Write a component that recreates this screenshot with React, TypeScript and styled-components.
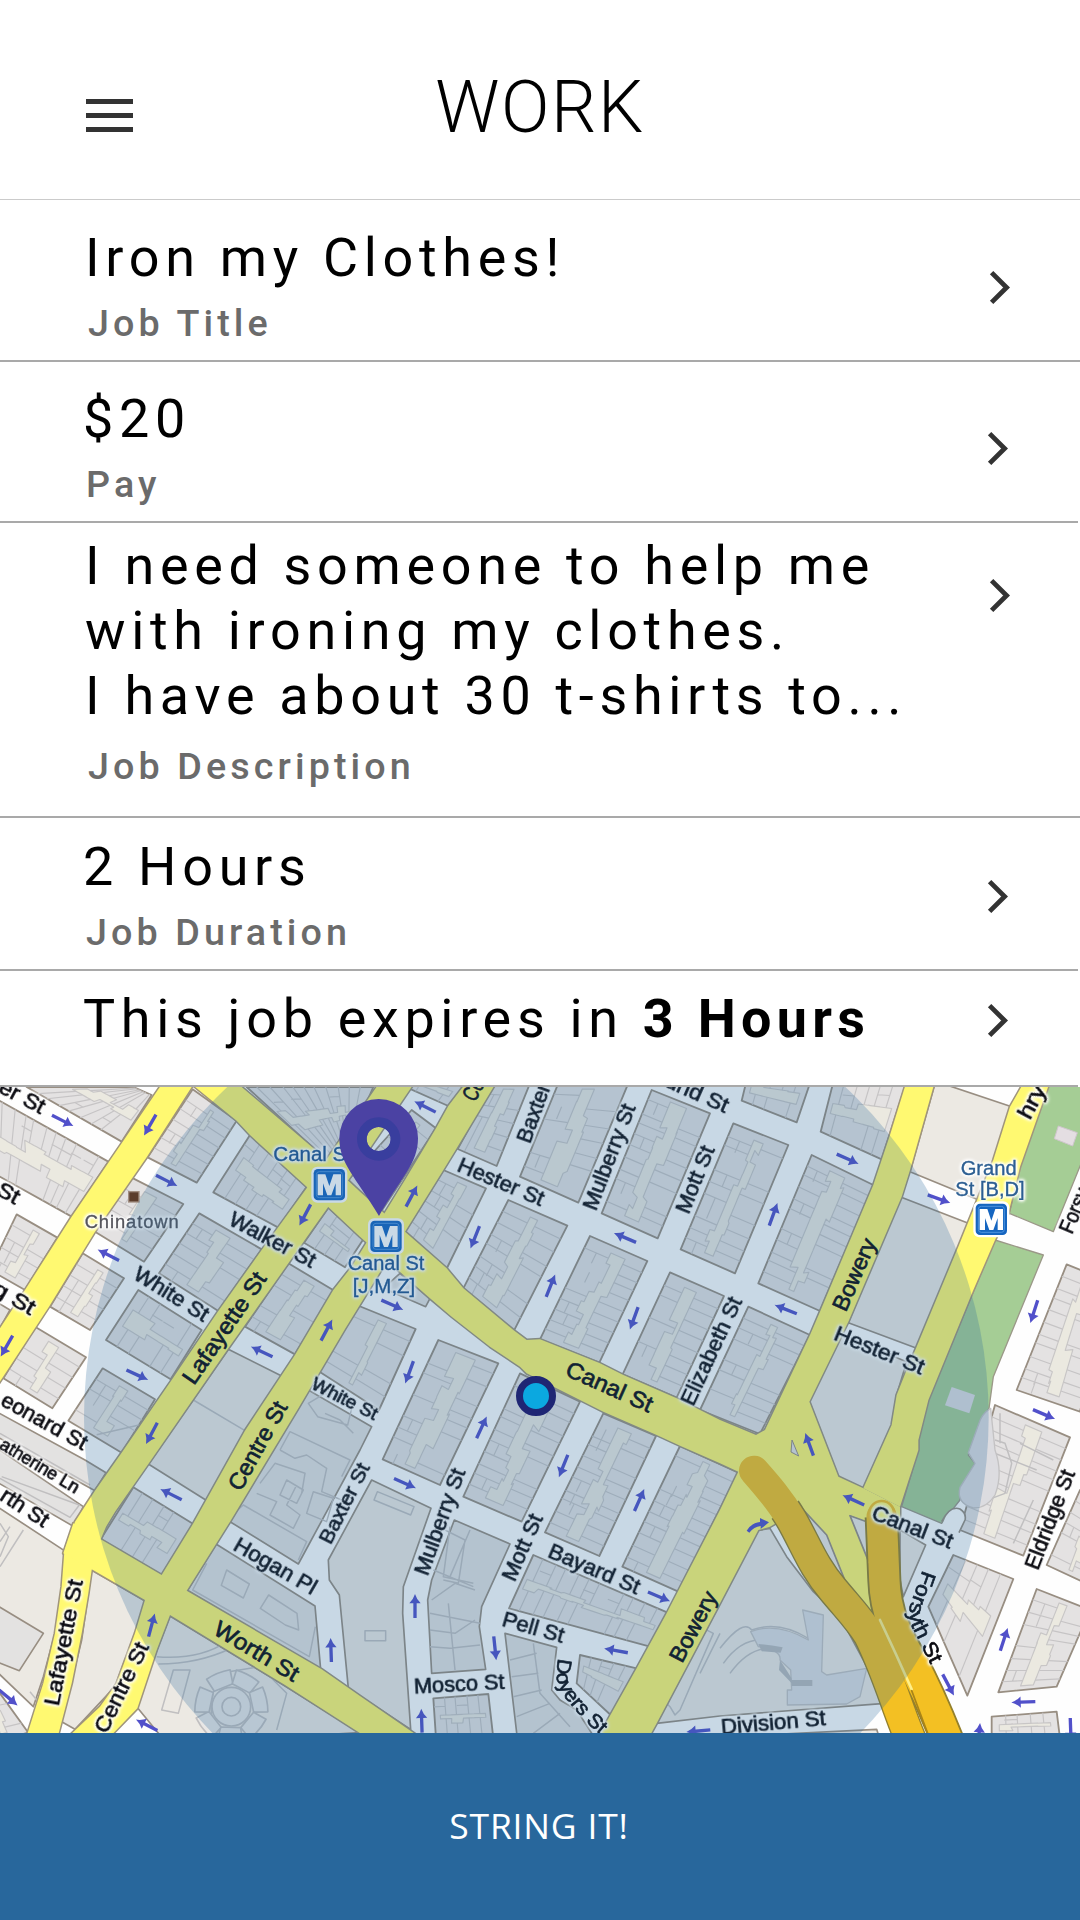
import React from "react";
import styled, { createGlobalStyle } from "styled-components";

const GlobalStyle = createGlobalStyle`
  html, body { margin: 0; padding: 0; background: #fff; }
  * { box-sizing: border-box; }
`;

const Screen = styled.div`
  width: 1080px;
  height: 1920px;
  display: flex;
  flex-direction: column;
  overflow: hidden;
  background: #fff;
  color: #000;
  font-family: Roboto, "Liberation Sans", sans-serif;
`;

const Header = styled.header`
  height: 200px;
  flex: none;
  display: grid;
  grid-template-columns: 1fr auto 1fr;
  align-items: start;
  border-bottom: 1px solid #cbcbcb;
`;

const MenuButton = styled.button`
  justify-self: start;
  margin: 99px 0 0 86px;
  padding: 0;
  border: 0;
  background: none;
  display: flex;
  flex-direction: column;
  gap: 9px;
`;

const MenuBar = styled.span`
  display: block;
  width: 47px;
  height: 5px;
  background: #333;
`;

const ScreenTitle = styled.h1`
  margin: 66px 0 0;
  font-size: 71.6px;
  line-height: 84px;
  font-weight: 300;
  letter-spacing: 1.5px;
`;

const Row = styled.section<{ $height: number; $top: number; $shift?: number; $short?: boolean }>`
  flex: none;
  width: ${(p) => (p.$short ? 1078 : 1080)}px;
  height: ${(p) => p.$height}px;
  padding: ${(p) => p.$top}px 0 0 ${(p) => 85 - (p.$shift ?? 0)}px;
  display: flex;
  align-items: flex-start;
  justify-content: space-between;
  border-bottom: 2px solid #a9a9a9;
`;

const RowText = styled.div<{ $gap?: number }>`
  display: flex;
  flex-direction: column;
  gap: ${(p) => p.$gap ?? 11}px;
`;

const Value = styled.div`
  font-size: 53.9px;
  line-height: 65px;
  letter-spacing: 5.7px;
  white-space: pre;
`;

const Strong = styled.b`
  font-weight: 700;
  letter-spacing: 5.3px;
`;

const Label = styled.div`
  padding-left: 3px;
  font-size: 37.7px;
  line-height: 44px;
  font-weight: 500;
  letter-spacing: 4.1px;
  color: #6b6b6b;
`;

const ChevronBox = styled.svg<{ $top: number; $right: number }>`
  flex: none;
  width: 22px;
  height: 35px;
  margin: ${(p) => p.$top}px ${(p) => p.$right}px 0 0;
`;

const MapPane = styled.div`
  flex: none;
  width: 1080px;
  height: 646px;
  overflow: hidden;
`;

const MapSvg = styled.svg`
  display: block;
  width: 1080px;
  height: 646px;
  background: #fefefe;
`;

const Street = styled.text<{ $size: number; $halo?: boolean }>`
  font-family: "Liberation Sans", Arial, sans-serif;
  font-size: ${(p) => p.$size}px;
  fill: #0a0a10;
  stroke: #0a0a10;
  stroke-width: 2px;
  filter: ${(p) =>
    p.$halo
      ? "drop-shadow(0 0 4px #fff) drop-shadow(0 0 4px #fff) drop-shadow(0 0 3px #fff)"
      : "none"};
`;

const Place = styled(Street)<{ $color: string }>`
  fill: ${(p) => p.$color};
  stroke: ${(p) => p.$color};
  stroke-width: 1px;
`;

const ActionButton = styled.button`
  flex: 1;
  border: 0;
  padding: 0 2px 4px 0;
  background: #28679c;
  color: #fff;
  font-family: "Open Sans", "Noto Sans", sans-serif;
  font-size: 35.5px;
  letter-spacing: 0.8px;
`;

const Chevron = ({ top, right = 69 }: { top: number; right?: number }) => (
  <ChevronBox $top={top} $right={right} viewBox="0 0 22 35">
    <path d="M2.6 2.6 L17.6 17.5 L2.6 32.4" fill="none" stroke="#333" strokeWidth="4.8" />
  </ChevronBox>
);

/* ---------- map geometry: three units per pixel ---------- */

const parcelBlocks = [
  "80,21 400,21 455,45 365,185",
  "-20,52 325,245 215,410 -20,279",
  "50,403 172,473 75,630 -30,570",
  "105,740 258,832 157,985 10,895",
  "248,520 372,595 270,750 150,680",
  "395,293 550,372 432,545 285,455",
  "578,28 710,122 590,308 443,232",
  "750,165 920,320 835,443 640,337",
  "598,400 785,508 655,693 477,580",
  "415,630 605,750 512,898 318,780",
  "865,550 1003,632 885,823 735,740",
  "985,383 1090,478 1035,562 912,488",
  "308,865 465,958 365,1118 205,1022",
  "740,21 1120,21 1060,160 985,245",
  "1235,90 1308,145 1140,400 1045,300",
  "1235,-20 1390,21 1345,78 1215,20",
  "1070,675 1247,747 1137,990 955,873",
  "1315,780 1495,850 1320,1215 1148,1138",
  "1560,880 1740,965 1565,1325 1390,1250",
  "1810,1000 1968,1068 1798,1428 1635,1357",
  "2040,1098 2215,1178 2035,1535 1867,1460",
  "1600,1425 2003,1598 1950,1700 1527,1585",
  "1740,1725 1910,1765 1832,1905 1730,1810",
  "400,1222 580,1332 485,1485 302,1378",
  "1300,1855 1465,1842 1480,1975 1308,1975",
  "1480,10 1590,10 1490,258 1373,207",
  "1675,10 1885,10 1735,368 1560,290",
  "1955,30 2130,100 1973,475 1805,400",
  "2200,130 2365,195 2205,580 2042,508",
  "1330,270 1458,325 1338,570 1215,455",
  "1525,360 1702,437 1542,752 1390,625",
  "1770,468 1942,543 1798,848 1620,778",
  "2010,577 2172,648 2030,953 1868,883",
  "2245,680 2430,765 2280,1062 2100,990",
  "2435,225 2620,315 2460,693 2275,610",
  "2245,-20 2440,-20 2390,127 2225,62",
  "2499,10 2718,10 2645,238 2462,155",
  "3200,553 3330,605 3240,995 3050,930",
  "2985,975 3210,1072 3070,1427 2880,1350",
  "3240,1230 3340,1300 3280,1520 3140,1455",
  "2860,1425 3040,1497 2902,1847 2785,1580",
  "3110,1527 3270,1590 3170,1820 2995,1837",
  "2975,1910 3170,1895 3180,1975 2975,1975",
  "-60,1850 0,1840 85,1958 -40,1990",
];

const plainBlocks = [
  "685,808 845,888 622,1263 445,1152",
  "-20,1272 193,1412 188,1520 165,1660 130,1790 100,1880 -20,1765",
  "275,1470 435,1563 405,1660 345,1820 225,1948 185,1925 245,1680",
  "510,1608 855,1818 1080,1958 500,1990 410,1880 470,1712",
  "1115,1200 1293,1285 1210,1520 1208,1600 1232,1948 1045,1825 1018,1545 988,1500 985,1440",
  "2700,350 2905,430 2750,805 2545,728",
  "2805,10 2825,10 3035,80 2960,370 2730,275",
  "2510,760 2720,845 2690,945 2675,1035 2590,1225 2515,1190 2428,965",
  "1970,1930 2160,1570 2270,1352 2310,1345 2360,1430 2440,1535 2520,1610 2590,1740 2655,1870 2160,1908",
  "2700,1350 2777,1395 2710,1550 2700,1500",
  "2290,1965 2630,1948 2640,1980 2290,1980",
];

const grayBlocks = [
  "-20,990 255,1140 318,1178 285,1232 -20,1064",
  "-20,1097 250,1280 222,1340 -20,1200",
  "-20,1570 130,1660 58,1772 -20,1742",
  "925,930 1115,1040 1080,1110 895,1452 690,1325",
  "648,1392 945,1578 962,1768 562,1532",
  "1363,1320 1530,1392 1445,1580 1438,1640 1457,1768 1295,1780 1283,1560 1295,1500",
  "1515,1660 1670,1702 1655,1830 1680,1860 1730,1890 1785,1975 1552,1975",
  "1200,580 1290,655 1277,680 1150,625",
  "-20,660 30,690 -20,780",
];

const detailLines = [
  "M580 960L735 1052 M290 1064L440 1030 M0 1060L270 1215 M0 1195L210 1312L238 1275L5 1190",
  "M925 970l50 -30l80 45l-12 50l-90 -25z M975 1000l45 20l40 40 M840 1110l30 -55l180 85l-25 50 M840 1110l45 25l35 -10l60 40l-15 70l60 25",
  "M780 1210l45 -60l90 30l-10 60 M770 1240l60 25l-20 40l70 40l20 -40l-40 -30l30 -60 M690 1310l40 -35l190 110l-25 55 M860 1200l50 30l-20 40l-50 -25z M940 1235l60 20l-20 70l-60 -25z",
  "M680 1470l68 42l-18 42l-66 -38z M806 1545l85 55l5 50l-40 -15l-75 -50z M620 1450l-42 80l350 200l18 -90",
  "M470 1730q130 10 210 -45 M475 1752q120 0 220 -48 M520 1770l50 0l-35 130l-50 -10z M640 1930q-20 -60 20 -150l120 -20l80 80l-30 110",
  "M0 1330l25 40l-25 60 M0 1385l30 -45 M70 1350L0 1460",
  "M90 1835l40 50l60 20 M1295 1560l70 -50l60 20 M1290 1650l75 10l60 -40 M1290 1700l60 5l90 -10 M1290 1600l150 30 M1345 1570l20 200 M1300 1470l120 50 M1350 1340l-20 150l90 20",
  "M1335 1350l60 30l-20 130l-45 -10 M1410 1350l-60 140 M1600 1690l20 150l90 100 M1530 1740l80 -20 M1535 1790l80 -10 M1540 1850l85 -20 M1550 1910l100 -40 M1600 1960l80 -60",
  "M1132 1235l110 45l-10 25l-110 -45z M1095 1652l62 0l0 30l-62 0z",
  "M2010 1880l-30 -30l110 -215l50 25l-100 230l-15 15z M2100 1780l60 -120",
  "M2160 1705q70 -90 95 -55q80 -30 170 25l-10 40 M2190 1780q50 -70 110 -75 M2170 1750q50 -70 110 -70",
  "M2985 1080l30 10l20 60l-20 90l-80 30 M3060 1090l100 50 M2960 1110l150 60 M3100 1260l-60 130 M3000 1000l0 90",
];

const yellowRoads = [
  "487,10 582,10 440,232 285,455 147,680 -20,935 -20,775 75,630 215,410 365,190",
  "1137,10 1242,10 1045,300 985,380 865,550 685,805 445,1152 345,1295 318,1340 302,1378 275,1470 265,1540 245,1660 215,1810 172,1975 78,1975 130,1810 165,1660 185,1520 193,1415 205,1380 225,1325 285,1232 365,1118 515,900 655,693 785,510 920,325",
  "1397,10 1487,10 1370,205 1330,270 1215,455 1035,747 895,985 690,1325 560,1532 510,1605 470,1710 412,1885 325,1975 200,1975 300,1880 350,1810 405,1660 435,1560 485,1485 580,1330 735,1052 885,825 1000,630 1055,560 1215,300 1308,145 1345,78",
  "220,1330 302,1378 485,1485 560,1532 965,1768 1080,1848 1260,1972 1100,1972 855,1815 510,1605 435,1560 275,1468 190,1420",
  "572,10 712,10 940,205 1080,335 1215,455 1340,565 1390,625 1540,750 1580,780 1620,778 1800,850 1870,885 2030,955 2160,1020 2268,1065 2515,1190 2590,1225 2700,1280 2700,1350 2600,1325 2548,1305 2610,1450 2640,1600 2735,1820 2620,1660 2535,1500 2480,1365 2380,1260 2215,1175 2160,1150 2040,1097 1970,1065 1810,995 1740,960 1580,880 1560,860 1470,800 1355,710 1290,655 1080,470 920,320 750,165 710,122",
  "2718,10 2803,10 2730,270 2705,350 2545,725 2428,965 2515,1190 2380,1300 2310,1340 2275,1350 2160,1570 1970,1930 1945,1975 1792,1975 1910,1765 2000,1600 2160,1290 2215,1175 2268,1065 2295,1050 2430,765 2460,695 2620,315 2670,165",
  "3070,10 3148,10 3060,260 3025,400 2985,480 2920,630 2785,960 2755,1080 2755,1110 2700,1280 2590,1225 2675,1035 2690,945 2720,870 2750,800 2875,500 2980,240 3030,80",
];

const parks = [
  "3148,10 3260,10 3260,210 3160,455 3028,400 3060,260",
  "2985,480 3130,525 2980,890 2967,985 2940,1030 2905,1125 2925,1150 2880,1230 2880,1260 2825,1330 2705,1280 2755,1110 2755,1080 2785,960",
];

const bridgeWest =
  "M2262 1172C2300 1215 2340 1260 2375 1320C2420 1400 2440 1460 2500 1530C2550 1590 2580 1620 2607 1665C2660 1770 2690 1880 2732 1980";
const bridgeEast = "M2645 1310L2653 1500C2656 1600 2692 1670 2735 1745C2775 1820 2810 1900 2842 1980";

const arrows: [number, number, number][] = [
  [188, 122, 27], [450, 135, 120], [500, 302, 27], [325, 525, 207], [915, 405, 118],
  [980, 750, -62], [785, 815, 205], [412, 885, 25], [20, 798, 120],
  [1275, 80, 207], [1235, 348, -62], [1425, 472, 112], [1875, 473, 203], [1652, 617, -68],
  [1902, 715, 110], [1177, 675, 24], [1228, 877, 110],
  [2543, 237, 24], [2817, 357, 20], [2320, 403, -70], [2357, 688, 202], [3102, 695, 108],
  [455, 1060, 118], [513, 1243, 207], [455, 1635, -75], [993, 1710, -92], [25, 1853, 40], [440, 1935, 207],
  [1445, 1042, -65], [1215, 1210, 24], [1690, 1158, 112], [1918, 1260, -66], [1245, 1578, -90],
  [1485, 1705, 84], [1977, 1550, 23], [1848, 1712, 190], [1265, 1922, -92], [2095, 1953, 175],
  [2428, 1093, 250], [2560, 1260, 205], [3132, 1003, 23], [3012, 1678, -72], [2845, 1815, 62],
  [3070, 1866, 178], [2937, 1965, -85], [3212, 1950, 88],
];

type StreetName = [string, number, number, number, number, number?, boolean?];
const streets: StreetName[] = [
  ["er St", -8, 35, 28, 146, 66, true],
  ["St", -15, 342, 29, 68, 66, true],
  ["g St", -26, 640, 30, 134, 66, true],
  ["eonard St", -2, 974, 29, 285, 66, true],
  ["atherine Ln", -5, 1104, 31, 268, 55, true],
  ["rth St", -4, 1258, 33, 159, 66, true],
  ["Walker St", 682, 432, 28, 284, 66, true],
  ["White St", 396, 594, 32, 252, 64, true],
  ["White St", 930, 924, 27, 215, 53, true],
  ["Lafayette St", 582, 918, -55.6, 390, 69],
  ["Centre St", 722, 1237, -61, 293, 69],
  ["Baxter St", 992, 1396, -63, 262, 63, true],
  ["Hogan Pl", 696, 1408, 30, 276, 66, true],
  ["Worth St", 636, 1660, 31, 285, 68],
  ["Lafayette St", 176, 1880, -79, 384, 68, true],
  ["Centre St", 320, 1964, -64, 293, 68, true],
  ["Hester St", 1368, 272, 23, 275, 66, true],
  ["Baxter", 1590, 193, -70, 184, 65, true],
  ["Ce", 1425, 68, -62, 62, 68],
  ["Mulberry St", 1788, 395, -69, 335, 65, true],
  ["Mott St", 2066, 405, -68, 212, 65, true],
  ["und St", 1990, 18, 24, 202, 66, true],
  ["Elizabeth St", 2080, 981, -65, 350, 65, true],
  ["Bowery", 2537, 698, -66, 230, 68],
  ["Hester St", 2498, 778, 22, 285, 66, true],
  ["Forsy", 3216, 465, -67, 140, 66, true],
  ["hry", 3090, 122, -62, 105, 68, true],
  ["Canal St", 1692, 885, 24, 278, 69],
  ["Mulberry St", 1283, 1490, -70, 335, 65, true],
  ["Mott St", 1544, 1508, -66, 212, 65, true],
  ["Bayard St", 1640, 1430, 23, 292, 66, true],
  ["Pell St", 1503, 1637, 16, 190, 66, true],
  ["Mosco St", 1243, 1841, -3, 272, 65, true],
  ["Bowery", 2046, 1752, -62, 230, 68],
  ["Division St", 2165, 1963, -5, 315, 64, true],
  ["Canal St", 2611, 1316, 21, 255, 66, true],
  ["Eldridge St", 3114, 1473, -69, 314, 66, true],
];

type Pt = [number, number];
const toPoints = (s: string): Pt[] => s.split(" ").map((p) => p.split(",").map(Number) as Pt);
const mix = (a: Pt, b: Pt, t: number): Pt => [a[0] + (b[0] - a[0]) * t, a[1] + (b[1] - a[1]) * t];
const span = (a: Pt, b: Pt) => Math.hypot(a[0] - b[0], a[1] - b[1]);

/* Splits a four-cornered block into lots on both sides of a yard. */
function lots(shape: string, seed: number) {
  let [a, b, c, d] = toPoints(shape);
  if (span(a, b) > span(a, d)) [a, b, c, d] = [b, c, d, a];
  let state = seed * 7919 + 17;
  const rnd = () => {
    state = (state * 1103515245 + 12345) % 2147483648;
    return state / 2147483648;
  };
  const at = (u: number, v: number): Pt => mix(mix(a, b, u), mix(d, c, u), v);
  const show = (p: Pt) => `${p[0].toFixed(1)} ${p[1].toFixed(1)}`;
  const count = Math.max(4, Math.round(span(a, d) / 36));
  let lines = "";
  const left: Pt[] = [];
  const right: Pt[] = [];
  let ul = 0.43;
  let ur = 0.55;
  for (let i = 0; i <= count; i++) {
    const v = i / count;
    if (rnd() > 0.45) ul = 0.32 + rnd() * 0.17;
    if (rnd() > 0.45) ur = 0.51 + rnd() * 0.16;
    const vl = Math.min(1, Math.max(0, v + (rnd() - 0.5) * 0.03));
    if (i > 0 && i < count) {
      left.push(at(ul, vl - 0.5 / count), at(ul, vl + 0.5 / count));
      right.push(at(ur, vl - 0.5 / count), at(ur, vl + 0.5 / count));
      if (rnd() > 0.15) lines += `M${show(at(0, vl))}L${show(at(ul, vl))}`;
      if (rnd() > 0.2) lines += `M${show(at(1, vl))}L${show(at(ur, vl))}`;
      if (rnd() > 0.7) lines += `M${show(at(ul / 2, vl))}L${show(at(ul / 2, Math.min(1, vl + 1 / count)))}`;
    }
  }
  const yard = "M" + [...left, ...right.reverse()].map(show).join("L") + "Z";
  return { lines, yard };
}

const Blocks = () => (
  <g strokeLinejoin="round">
    {plainBlocks.map((p) => (
      <polygon key={p} points={p} fill="#ece9e3" stroke="#988e82" strokeWidth="5" />
    ))}
    {grayBlocks.map((p) => (
      <polygon key={p} points={p} fill="#e3e2e1" stroke="#988e82" strokeWidth="5" />
    ))}
    {parcelBlocks.map((p, i) => {
      const { lines, yard } = lots(p, i + 1);
      return (
        <g key={p}>
          <polygon points={p} fill="#e4e2e2" stroke="#988e82" strokeWidth="5.5" />
          <path d={yard} fill="#ebe9e0" stroke="#c8c6c6" strokeWidth="3.5" />
          <path d={lines} fill="none" stroke="#c6c4c5" strokeWidth="3.5" />
        </g>
      );
    })}
    {detailLines.map((d) => (
      <path key={d} d={d} fill="none" stroke="#c0bfc0" strokeWidth="4.5" />
    ))}
    <path
      d="M2252 1655Q2330 1625 2425 1680L2408 1590L2470 1605L2465 1775L2480 1785L2600 1765L2580 1850L2540 1872L2362 1875V1830H2375L2372 1770L2340 1740Q2345 1710 2275 1700Z"
      fill="#dcdee2"
      stroke="#c3c2c3"
      strokeWidth="4"
    />
    <path d="M2275 1692Q2310 1695 2348 1702L2342 1718L2285 1714Z M2375 1800h62v18h-62z M2340 1740l35 55v15l-38 -40z" fill="#b9babd" />
    <g fill="#e8e7e6" stroke="#c0bfc0" strokeWidth="5">
      <circle cx="694" cy="1880" r="58" />
      <circle cx="694" cy="1880" r="28" />
      {[-112, -62, -12, 40, 92, 142, 192].map((r) => (
        <path key={r} d="M62 -30L104 -38Q112 0 104 38L62 30Z" transform={`translate(694 1880) rotate(${r})`} />
      ))}
    </g>
  </g>
);

const Roads = () => (
  <g strokeLinejoin="round">
    {parks.map((p) => (
      <polygon key={p} points={p} fill="#a5cd95" stroke="#9b9888" strokeWidth="4" />
    ))}
    <path d="M2972 985Q2945 1000 2935 1035L2905 1118L2925 1150L2880 1222Q2868 1270 2920 1284Q2960 1285 2985 1245Q3010 1180 2985 1110Z" fill="#dcdce0" stroke="#c3c2c3" strokeWidth="4" />
    <polygon points="2855,921 2925,945 2908,1000 2835,976" fill="#dcdce0" />
    <polygon points="3175,138 3232,158 3218,198 3163,176" fill="#e4dee2" stroke="#cfc6cc" strokeWidth="3" />
    <path d="M2825 1345Q2840 1280 2875 1285Q2900 1300 2895 1320L2875 1370Z" fill="#fefefe" />
    <path d="M2825 1325Q2850 1275 2880 1287Q2900 1300 2895 1320L2877 1358" fill="none" stroke="#988e82" strokeWidth="5" />
    {yellowRoads.map((p) => (
      <polygon key={p} points={p} fill="#fff971" stroke="#a0957c" strokeWidth="9" />
    ))}
    {yellowRoads.map((p) => (
      <polygon key={p + "f"} points={p} fill="#fff971" />
    ))}
    <polygon points="2375,1252 2480,1365 2535,1502 2450,1400" fill="#ece9e3" stroke="#988e82" strokeWidth="5" />
    <polygon points="2550,1307 2600,1325 2608,1450" fill="#ece9e3" stroke="#988e82" strokeWidth="5" />
    <polygon points="2376,1080 2396,1128 2373,1116" fill="#e4e2e2" stroke="#988e82" strokeWidth="3" />
    <g fill="none" strokeLinecap="round">
      <path d={bridgeEast} stroke="#94802c" strokeWidth="102" strokeLinecap="butt" />
      <path d={bridgeWest} stroke="#94802c" strokeWidth="98" strokeLinecap="butt" strokeDasharray="0 150 2000" />
      <path d="M2605 1440L2648 1610L2700 1700L2640 1640Z" fill="#fff971" />
      <path d={bridgeEast} stroke="#f3c023" strokeWidth="91" />
      <path d={bridgeWest} stroke="#f3c023" strokeWidth="90" />
      <path d="M2640 1620Q2690 1725 2735 1828" stroke="#fff08a" strokeWidth="8" />
      <path d="M2735 1832L2785 1965" stroke="#a98418" strokeWidth="5" />
      <circle cx="2645" cy="1300" r="37" stroke="#f3c023" strokeWidth="8" fill="#fff971" />
    </g>
  </g>
);

const Arrow = ({ x, y, turn }: { x: number; y: number; turn: number }) => (
  <path
    d="M-36 -5H8V-17Q20 -5 36 0Q20 5 8 17V5H-36Z"
    fill="#5150ca"
    transform={`translate(${x} ${y}) rotate(${turn})`}
  />
);

const Metro = ({ x, y }: { x: number; y: number }) => (
  <g transform={`translate(${x} ${y})`}>
    <rect x="-54" y="-54" width="108" height="108" rx="18" fill="#fff" />
    <rect x="-47" y="-47" width="94" height="94" rx="13" fill="#1565c0" />
    <rect x="-39" y="-39" width="78" height="78" rx="9" fill="none" stroke="#4d92dd" strokeWidth="3" />
    <path d="M-35 32V-31H-12L0 4L12 -31H35V32H19V-4L6 32H-6L-19 -4V32Z" fill="#fff" />
  </g>
);

const JobMap = () => (
  <MapPane>
    <MapSvg viewBox="0 21 3240 1938" preserveAspectRatio="none">
      <Blocks />
      <Roads />
      {arrows.map(([x, y, turn]) => (
        <Arrow key={`${x}-${y}`} x={x} y={y} turn={turn} />
      ))}
      <path d="M2240 1352Q2255 1328 2280 1326V1314L2307 1327L2282 1347V1338Q2262 1340 2248 1358Z" fill="#5150ca" />
      {streets.map(([name, x, y, turn, length, size = 66, halo = false]) => (
        <Street
          key={`${name}${x}`}
          $size={size}
          $halo={halo}
          textLength={length}
          lengthAdjust="spacingAndGlyphs"
          transform={`translate(${x} ${y}) rotate(${turn})`}
        >
          {name}
        </Street>
      ))}
      <defs>
        <path id="doyers" d="M1676 1735Q1658 1800 1690 1845Q1730 1900 1790 1955L1830 1990" />
        <path id="forsyth" d="M2768 1470L2738 1555Q2718 1600 2736 1640Q2765 1700 2815 1800" />
      </defs>
      <Street $size={60} $halo>
        <textPath href="#doyers" textLength="278" lengthAdjust="spacingAndGlyphs">Doyers St</textPath>
      </Street>
      <Street $size={62} $halo>
        <textPath href="#forsyth" textLength="305" lengthAdjust="spacingAndGlyphs">Forsyth St</textPath>
      </Street>
      <rect x="386" y="335" width="31" height="31" fill="#5b3d2c" stroke="#a08d80" strokeWidth="4" />
      <Place $size={55} $halo $color="#55555c" x="254" y="445" textLength="282">Chinatown</Place>
      <Place $size={58} $halo $color="#22558f" x="820" y="243" textLength="236" lengthAdjust="spacingAndGlyphs">Canal St</Place>
      <Place $size={58} $halo $color="#22558f" x="1043" y="571" textLength="230" lengthAdjust="spacingAndGlyphs">Canal St</Place>
      <Place $size={58} $halo $color="#22558f" x="1058" y="639" textLength="188" lengthAdjust="spacingAndGlyphs">[J,M,Z]</Place>
      <Place $size={58} $halo $color="#2d5f92" x="2882" y="285" textLength="168" lengthAdjust="spacingAndGlyphs">Grand</Place>
      <Place $size={58} $halo $color="#2d5f92" x="2866" y="347" textLength="208" lengthAdjust="spacingAndGlyphs">St [B,D]</Place>
      <Metro x={988} y={314} />
      <Metro x={1158} y={469} />
      <Metro x={2974} y={418} />
      <circle cx="1609" cy="1012" r="1357" fill="#28679c" fillOpacity="0.25" />
      <path
        fillRule="evenodd"
        fill="#4b42a3"
        d="M1018 175A118 118 0 0 1 1254 175C1254 250 1205 290 1137 408C1066 290 1018 250 1018 175ZM1100 177a36 36 0 1 0 72 0a36 36 0 1 0 -72 0Z"
      />
      <circle cx="1136" cy="177" r="50.5" fill="none" stroke="#393e9e" strokeWidth="29" />
      <circle cx="1608" cy="948" r="49.5" fill="#0ba8e0" stroke="#1f2674" strokeWidth="21" />
    </MapSvg>
  </MapPane>
);

export default function App() {
  return (
    <Screen>
      <GlobalStyle />
      <Header>
        <MenuButton aria-label="Menu">
          <MenuBar />
          <MenuBar />
          <MenuBar />
        </MenuButton>
        <ScreenTitle>WORK</ScreenTitle>
      </Header>
      <Row $height={162} $top={25}>
        <RowText>
          <Value>Iron my Clothes!</Value>
          <Label>Job Title</Label>
        </RowText>
        <Chevron top={45} />
      </Row>
      <Row $height={161} $top={24} $shift={2} $short>
        <RowText>
          <Value>$20</Value>
          <Label>Pay</Label>
        </RowText>
        <Chevron top={45} />
      </Row>
      <Row $height={295} $top={10}>
        <RowText $gap={16}>
          <Value>{"I need someone to help me\nwith ironing my clothes.\nI have about 30 t-shirts to..."}</Value>
          <Label>Job Description</Label>
        </RowText>
        <Chevron top={45} />
      </Row>
      <Row $height={153} $top={16} $shift={2} $short>
        <RowText>
          <Value>2 Hours</Value>
          <Label>Job Duration</Label>
        </RowText>
        <Chevron top={45} />
      </Row>
      <Row $height={116} $top={15} $shift={2} $short>
        <RowText>
          <Value>
            This job expires in <Strong>3 Hours</Strong>
          </Value>
        </RowText>
        <Chevron top={17} />
      </Row>
      <JobMap />
      <ActionButton>STRING IT!</ActionButton>
    </Screen>
  );
}
